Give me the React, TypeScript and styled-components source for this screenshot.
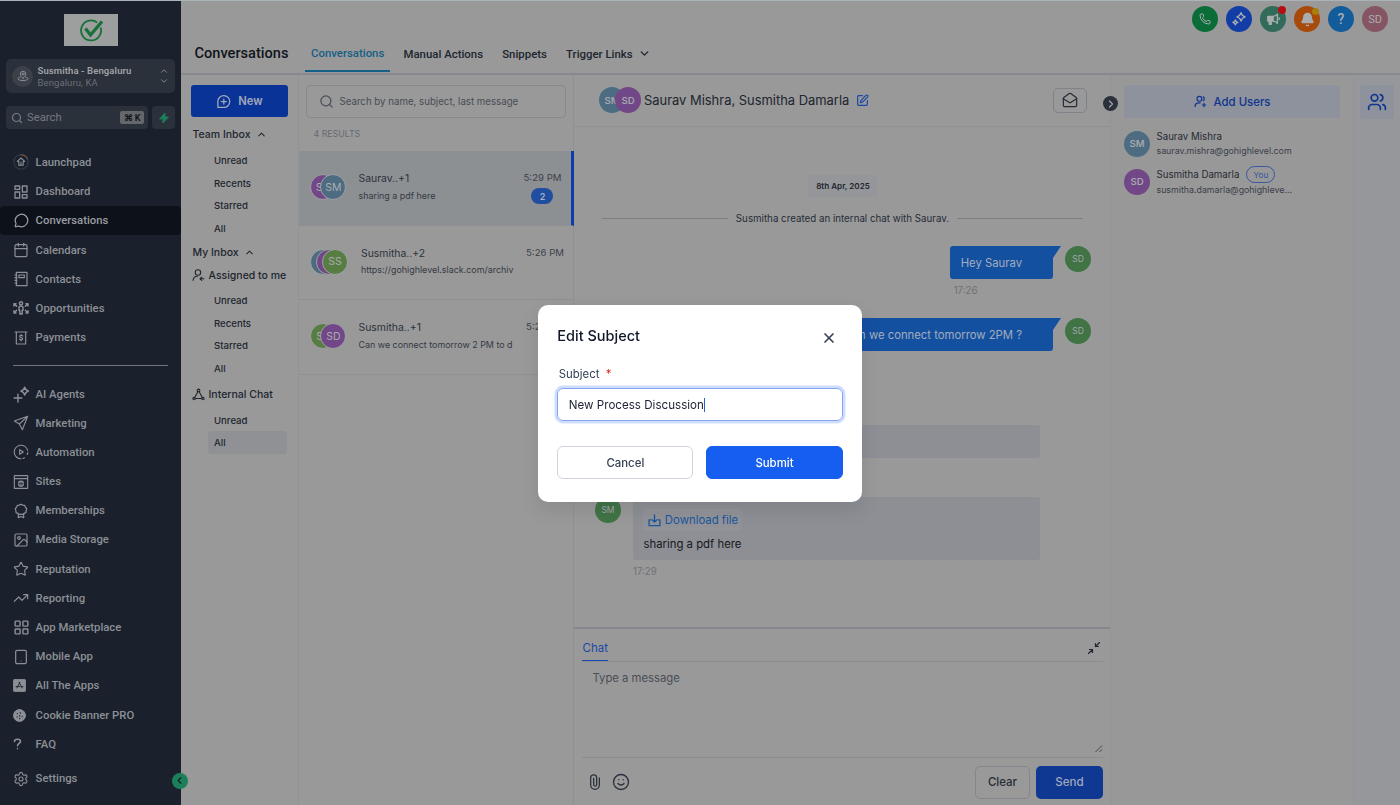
import { ReactNode } from "react";
import styled, { createGlobalStyle, css } from "styled-components";
import {
  Bell,
  Calendar,
  ChevronDown,
  ChevronLeft,
  ChevronRight,
  ChevronUp,
  Image as ImageIcon,
  LayoutGrid,
  MailOpen,
  MessageCircle,
  Phone,
  Search,
  Settings,
  Smile,
  SquarePen,
  Star,
  Tablet,
  TrendingUp,
  Users,
  X,
} from "lucide-react";

const COLOR = {
  SIDEBAR: "#1a202c",
  SIDEBAR_ACTIVE: "#0d111a",
  SIDEBAR_TEXT: "#8c9096",
  PAGE: "#999999",
  LINE: "#8f9093",
  TEXT: "#20262f",
  MUTED: "#474c55",
  BLUE: "#0a3397",
  TEAL: "#4d6c82",
  PURPLE: "#714787",
  GREEN: "#407445",
  OLIVE: "#587d43",
};

type IconProps = { size?: number; children: ReactNode; sw?: number; box?: number };

const Svg = ({ size = 16, sw = 1.8, box = 24, children }: IconProps) => (
  <svg
    width={size}
    height={size}
    viewBox={`0 0 ${box} ${box}`}
    fill="none"
    stroke="currentColor"
    strokeWidth={sw}
    strokeLinecap="round"
    strokeLinejoin="round"
  >
    {children}
  </svg>
);

const LaunchpadIcon = () => (
  <Svg sw={1.6}>
    <circle cx="12" cy="12" r="10.8" stroke="#30404f" />
    <path d="M12 1.2a10.8 10.8 0 0 1 9.4 5.4" stroke="#8a5a3c" />
    <path d="M12 6 6.5 11.2h2.2v5.8h6.6v-5.8h2.2zM12 12v5" />
  </Svg>
);

const DashboardIcon = () => (
  <Svg sw={2}>
    <path d="M3 3h7v5H3zM3 12h7v9H3zM14 3h7v9h-7zM14 16h7v5h-7z" />
  </Svg>
);

const ContactsIcon = () => (
  <Svg sw={1.8}>
    <path d="M5 2h16v20H5zM9 6h8v4H9zM3 6h3M3 10h3M3 14h3M3 18h3" />
  </Svg>
);

const OpportunitiesIcon = () => (
  <Svg sw={2.2} size={16}>
    <circle cx="12" cy="5" r="2.4" />
    <path d="M9 12a3 3 0 0 1 6 0v3.500h-1.200V21h-3.600v-5.500H9z" />
    <path d="M1.500 9V5.500h3M2 6l3.500 3.500M22.500 9V5.500h-3M22 6l-3.500 3.500M1.500 16v3.500h3M2 19l3.500-3.500M22.500 16v3.500h-3M22 19l-3.500-3.500" />
  </Svg>
);

const PaymentsIcon = () => (
  <Svg sw={1.8}>
    <path d="M3 3h18M5 3v18h14V3M14.500 9c-.6-1-4.500-1.400-4.500.8 0 2.200 4.500 1.200 4.500 3.400 0 2.300-4 1.900-5 .6M12.200 7v1M12.200 15.200v1.300" />
  </Svg>
);

const AgentsIcon = () => (
  <Svg sw={2} size={17}>
    <path d="M16.500 1.800c.9 3.400 2.100 4.600 5.500 5.500-3.400.9-4.600 2.100-5.500 5.500-.9-3.400-2.100-4.600-5.500-5.500 3.400-.9 4.600-2.100 5.500-5.500zM7 11.500v11M1.500 17h11" />
  </Svg>
);

const MarketingIcon = () => (
  <Svg sw={1.7}>
    <path d="M22 2 2 9l7.500 4.500L14 22zM22 2 9.500 13.500" />
  </Svg>
);

const AutomationIcon = () => (
  <Svg sw={1.7}>
    <path d="M12 22.200a10.200 10.200 0 1 1 10-12.500" />
    <path d="M22.200 13c-.1 1-.4 2-.8 2.800M15 21.700c.8-.3 1.500-.6 2.200-1" />
    <path d="m10 8.500 5.500 3.500-5.500 3.500z" />
  </Svg>
);

const SitesIcon = () => (
  <Svg sw={1.7}>
    <path d="M2 2.500h20v19H2zM2 7h20" />
    <circle cx="12" cy="14.500" r="3.800" fill="currentColor" fillOpacity=".6" />
    <path d="M8.500 14.500h7" stroke="#1a202c" strokeWidth="1" />
  </Svg>
);

const MembershipsIcon = () => (
  <Svg sw={1.8}>
    <path d="m12 1.800 2.600 1.400 3 .3 1 2.800 2 2.300-.9 2.900-.3 3-2.800 1.100L14.500 17h-5l-2.100-1.400-2.800-1.100-.3-3-.9-2.900 2-2.300 1-2.800 3-.3z" />
    <path d="M8 16.500V22l4-1.800 4 1.800v-5.500" />
  </Svg>
);

const AllAppsIcon = () => (
  <Svg size={13} sw={1.6}>
    <rect x="1" y="1" width="22" height="22" rx="1.500" fill="currentColor" />
    <path d="m12.800 6-5.600 10.500M11.200 6l5.600 10.500M5.500 14h7.500M16 14h2.500" stroke="#1a202c" />
  </Svg>
);

const CookieIcon = () => (
  <Svg size={13}>
    <circle cx="12" cy="12" r="11" fill="currentColor" />
    <path
      d="M8 8.500h.1M13.500 7.500h.1M7.500 14.500h.1M12.500 12.500h.1M12.500 17.500h.1M17 14h.1"
      stroke="#1a202c"
      strokeWidth="2.600"
    />
  </Svg>
);

const FaqIcon = () => (
  <Svg size={12} sw={3.2}>
    <path d="M3 7c0-6 12-6 12 0 0 4-6 4-6 8.500M9 21v.2" />
  </Svg>
);

const UserAddIcon = () => (
  <Svg size={13} sw={2.2}>
    <circle cx="10" cy="7" r="4.500" />
    <path d="M2 21c0-4 2.500-6.500 7-6.500h2.500M17 3.200c2.600 1.600 2.600 5.800 0 7.500M18.500 15.500v6M15.500 18.500h6" />
  </Svg>
);

const AssignedIcon = () => (
  <Svg size={13} sw={2}>
    <circle cx="11" cy="6.500" r="5" />
    <path d="M2 21c.5-5 3.500-7.500 8-7.500M15 18h7M18 15l-3.200 3 3.200 3" />
  </Svg>
);

const NetworkIcon = () => (
  <Svg size={13} sw={2}>
    <circle cx="12" cy="4.500" r="2.500" />
    <circle cx="3.800" cy="19.500" r="2.200" />
    <circle cx="20.200" cy="19.500" r="2.200" />
    <path d="M10.800 7 5 17.500M13.200 7 19 17.500M6 19.500h12" />
  </Svg>
);

const NewChatIcon = () => (
  <Svg size={15} sw={2}>
    <path d="M3 21.500v-9.700A9.500 9.500 0 1 1 12.500 21.500zM12.500 8v8M8.500 12h8" />
  </Svg>
);

const PinIcon = () => (
  <Svg size={12} sw={1.9}>
    <path d="M12 16.500c-3.500-3-5.500-5.500-5.500-8.500a5.500 5.500 0 0 1 11 0c0 3-2 5.500-5.500 8.500z" />
    <circle cx="12" cy="8" r="2" />
    <path d="M6.500 14.500c-3 .6-4.500 1.600-4.500 3 0 2 4 3.500 10 3.500s10-1.500 10-3.500c0-1.400-1.500-2.400-4.500-3" />
  </Svg>
);

const SparkleIcon = () => (
  <Svg size={16} sw={2}>
    <path d="M15 2.500c1 4 2.300 5.300 6.300 6.300-4 1-5.300 2.300-6.300 6.300-1-4-2.300-5.300-6.300-6.300 4-1 5.300-2.300 6.300-6.300zM6.500 13.500c.6 2.300 1.400 3.100 3.700 3.700-2.300.6-3.100 1.400-3.700 3.700-.6-2.300-1.400-3.100-3.700-3.700 2.300-.6 3.100-1.400 3.700-3.700z" />
  </Svg>
);

const MegaphoneIcon = () => (
  <Svg size={14} sw={2.2}>
    <path d="M12 7.500v8c3 .2 5.500 1.500 7.500 4V3.500c-2 2.500-4.500 3.800-7.500 4z" />
    <path d="M12 7.500H3v8h9zM5.500 15.500V21H9v-5.500" fill="currentColor" />
    <path d="M22.500 10v3" />
  </Svg>
);

const DownloadIcon = () => (
  <Svg size={13} sw={2.4}>
    <path d="M12 1.500v13M7.500 10.500l4.500 4.300 4.500-4.300M4.500 11H2v10.500h20V11h-2.500" />
  </Svg>
);

const CollapseIcon = () => (
  <Svg size={12} sw={1.2} box={12}>
    <path d="m11.500.5-4 4M7.500 1.500v3h3M.5 11.500l4-4M4.500 10.500v-3h-3" />
  </Svg>
);

const ClipIcon = () => (
  <Svg size={16} sw={1.9}>
    <path d="M18.500 6v10.500a6.500 6.500 0 0 1-13 0V5.800a4.500 4.500 0 0 1 9 0v10a2.200 2.200 0 0 1-4.500 0V6.500" />
  </Svg>
);

const Logo = () => (
  <svg width="25" height="25" viewBox="0 0 25 25" fill="none" stroke="#17703a">
    <path d="M21.600 9.500a10 10 0 1 1-3.500-5" strokeWidth="1.800" />
    <path d="m6.500 10.500 5 6.500L23 3.500" strokeWidth="3.200" />
  </svg>
);

const TOP_ITEMS = [
  { label: "Launchpad", icon: <LaunchpadIcon /> },
  { label: "Dashboard", icon: <DashboardIcon /> },
  { label: "Conversations", icon: <MessageCircle size={15} strokeWidth={2} />, active: true },
  { label: "Calendars", icon: <Calendar size={16} strokeWidth={1.8} /> },
  { label: "Contacts", icon: <ContactsIcon /> },
  { label: "Opportunities", icon: <OpportunitiesIcon /> },
  { label: "Payments", icon: <PaymentsIcon /> },
];

const BOTTOM_ITEMS = [
  { label: "AI Agents", icon: <AgentsIcon /> },
  { label: "Marketing", icon: <MarketingIcon /> },
  { label: "Automation", icon: <AutomationIcon /> },
  { label: "Sites", icon: <SitesIcon /> },
  { label: "Memberships", icon: <MembershipsIcon /> },
  { label: "Media Storage", icon: <ImageIcon size={16} strokeWidth={1.8} /> },
  { label: "Reputation", icon: <Star size={16} strokeWidth={1.7} /> },
  { label: "Reporting", icon: <TrendingUp size={16} strokeWidth={1.8} /> },
  { label: "App Marketplace", icon: <LayoutGrid size={17} strokeWidth={2} /> },
  { label: "Mobile App", icon: <Tablet size={16} strokeWidth={1.8} /> },
  { label: "All The Apps", icon: <AllAppsIcon />, small: true },
  { label: "Cookie Banner PRO", icon: <CookieIcon />, small: true },
  { label: "FAQ", icon: <FaqIcon />, small: true },
];

const THREADS = [
  {
    name: "Saurav..+1",
    text: "sharing a pdf here",
    time: "5:29 PM",
    unread: 2,
    avatars: [
      { text: "SD", color: COLOR.PURPLE },
      { text: "SM", color: COLOR.TEAL },
    ],
  },
  {
    name: "Susmitha..+2",
    text: "https://gohighlevel.slack.com/archiv",
    time: "5:26 PM",
    avatars: [
      { text: "", color: COLOR.TEAL },
      { text: "", color: COLOR.PURPLE },
      { text: "SS", color: COLOR.OLIVE },
    ],
  },
  {
    name: "Susmitha..+1",
    text: "Can we connect tomorrow 2 PM to d",
    time: "5:25 PM",
    avatars: [
      { text: "SS", color: COLOR.OLIVE },
      { text: "SD", color: COLOR.PURPLE },
    ],
  },
];

const Sidebar = () => (
  <S.Sidebar>
    <S.LogoBox>
      <Logo />
    </S.LogoBox>
    <S.Account>
      <S.AccountIcon>
        <PinIcon />
      </S.AccountIcon>
      <S.AccountText>
        <strong>Susmitha - Bengaluru</strong>
        <span>Bengaluru, KA</span>
      </S.AccountText>
      <S.AccountArrows>
        <ChevronUp size={10} strokeWidth={2.4} />
        <ChevronDown size={10} strokeWidth={2.4} />
      </S.AccountArrows>
    </S.Account>
    <S.SearchRow>
      <S.SideSearch>
        <Search size={12} strokeWidth={2.4} />
        <span>Search</span>
        <S.Shortcut>⌘ K</S.Shortcut>
      </S.SideSearch>
      <S.Bolt>
        <svg width="10" height="12" viewBox="0 0 10 12">
          <path d="M6 1 .6 6.900h3.600L3.800 11l5.600-5.900H6z" fill="#1d7f5a" stroke="#1d7f5a" />
        </svg>
      </S.Bolt>
    </S.SearchRow>
    <S.Menu>
      {TOP_ITEMS.map(({ label, icon, active }) => (
        <S.MenuItem key={label} $active={active}>
          <S.MenuIcon>{icon}</S.MenuIcon>
          {label}
        </S.MenuItem>
      ))}
    </S.Menu>
    <S.MenuDivider />
    <S.Menu>
      {BOTTOM_ITEMS.map(({ label, icon, small }) => (
        <S.MenuItem key={label}>
          <S.MenuIcon $small={small}>{icon}</S.MenuIcon>
          {label}
        </S.MenuItem>
      ))}
    </S.Menu>
    <S.SettingsItem>
      <S.MenuIcon>
        <Settings size={16} strokeWidth={1.7} />
      </S.MenuIcon>
      Settings
    </S.SettingsItem>
    <S.Collapse>
      <ChevronLeft size={11} strokeWidth={2.6} />
    </S.Collapse>
  </S.Sidebar>
);

const TopBar = () => (
  <S.TopBar>
    <S.PageTitle>Conversations</S.PageTitle>
    <S.Tabs>
      <S.Tab $active>Conversations</S.Tab>
      <S.Tab>Manual Actions</S.Tab>
      <S.Tab>Snippets</S.Tab>
      <S.Tab>
        Trigger Links
        <ChevronDown size={13} strokeWidth={2.6} />
      </S.Tab>
    </S.Tabs>
    <S.Actions>
      <S.Action $color="#0a6c36">
        <Phone size={12} strokeWidth={2} />
      </S.Action>
      <S.Action $color="#123da6">
        <SparkleIcon />
      </S.Action>
      <S.Action $color="#336b5a">
        <MegaphoneIcon />
        <S.Dot $color="#b40f12" />
      </S.Action>
      <S.Action $color="#a84a0a">
        <Bell size={15} strokeWidth={2} fill="currentColor" />
        <S.Dot $color="#a87f0c" $small />
      </S.Action>
      <S.Action $color="#135c9c">?</S.Action>
      <S.Action $color="#855563" $user>
        SD
      </S.Action>
    </S.Actions>
  </S.TopBar>
);

const InboxNav = () => (
  <S.InboxNav>
    <S.NewButton>
      <NewChatIcon />
      New
    </S.NewButton>
    <S.Group $top={7} $bottom={5}>
      Team Inbox <ChevronUp size={11} strokeWidth={2.2} />
    </S.Group>
    <S.Folder>Unread</S.Folder>
    <S.Folder>Recents</S.Folder>
    <S.Folder>Starred</S.Folder>
    <S.Folder>All</S.Folder>
    <S.Group $top={2.9} $bottom={2.5}>
      My Inbox <ChevronUp size={11} strokeWidth={2.2} />
    </S.Group>
    <S.Group $top={0} $bottom={3.9} $tight>
      <AssignedIcon /> Assigned to me
    </S.Group>
    <S.Folder>Unread</S.Folder>
    <S.Folder>Recents</S.Folder>
    <S.Folder>Starred</S.Folder>
    <S.Folder>All</S.Folder>
    <S.Group $top={4.4} $bottom={4.5} $tight>
      <NetworkIcon /> Internal Chat
    </S.Group>
    <S.Folder>Unread</S.Folder>
    <S.Folder $active>All</S.Folder>
  </S.InboxNav>
);

const ThreadList = () => (
  <S.ThreadList>
    <S.ListSearch>
      <Search size={15} strokeWidth={1.9} />
      Search by name, subject, last message
    </S.ListSearch>
    <S.Results>4 RESULTS</S.Results>
    {THREADS.map(({ name, text, time, unread, avatars }) => (
      <S.Thread key={name} $active={!!unread}>
        <S.AvatarStack $count={avatars.length}>
          {avatars.map((avatar, i) => (
            <S.ThreadAvatar key={i} $color={avatar.color} $count={avatars.length}>
              {avatar.text}
            </S.ThreadAvatar>
          ))}
        </S.AvatarStack>
        <S.ThreadText>
          <S.ThreadName>{name}</S.ThreadName>
          <S.ThreadPreview>{text}</S.ThreadPreview>
        </S.ThreadText>
        <S.ThreadMeta $unread={!!unread}>
          {time}
          {unread && <S.Unread>{unread}</S.Unread>}
        </S.ThreadMeta>
      </S.Thread>
    ))}
  </S.ThreadList>
);

const Chat = () => (
  <S.Chat>
    <S.ChatHeader>
      <S.Avatar $color={COLOR.TEAL}>SM</S.Avatar>
      <S.Avatar $color={COLOR.PURPLE} $overlap>
        SD
      </S.Avatar>
      <S.ChatTitle>Saurav Mishra, Susmitha Damarla</S.ChatTitle>
      <S.EditIcon>
        <SquarePen size={13} strokeWidth={2.2} />
      </S.EditIcon>
      <S.MailButton>
        <MailOpen size={16} strokeWidth={1.8} />
      </S.MailButton>
    </S.ChatHeader>
    <S.Messages>
      <S.DatePill>8th Apr, 2025</S.DatePill>
      <S.SystemLine>Susmitha created an internal chat with Saurav.</S.SystemLine>
      <S.OwnRow $top={20}>
        <S.OwnMessage>
          <S.OwnBubble>Hey Saurav</S.OwnBubble>
          <S.Time $own>17:26</S.Time>
        </S.OwnMessage>
        <S.Avatar $color={COLOR.GREEN} $light>
          SD
        </S.Avatar>
      </S.OwnRow>
      <S.OwnRow $top={19}>
        <S.OwnMessage>
          <S.OwnBubble>Can we connect tomorrow 2PM ?</S.OwnBubble>
        </S.OwnMessage>
        <S.Avatar $color={COLOR.GREEN} $light>
          SD
        </S.Avatar>
      </S.OwnRow>
      <S.PeerRow $top={74}>
        <S.Avatar $color={COLOR.GREEN} $light>
          SM
        </S.Avatar>
        <S.PeerMessage>
          <S.PeerBubble $height={33} />
        </S.PeerMessage>
      </S.PeerRow>
      <S.PeerRow $top={39}>
        <S.Avatar $color={COLOR.GREEN} $light>
          SM
        </S.Avatar>
        <S.PeerMessage>
          <S.PeerBubble $height={63}>
            <S.Download>
              <DownloadIcon />
              Download file
            </S.Download>
            <span>sharing a pdf here</span>
          </S.PeerBubble>
          <S.Time>17:29</S.Time>
        </S.PeerMessage>
      </S.PeerRow>
    </S.Messages>
    <S.Composer>
      <S.ComposerTabs>
        <S.ComposerTab>Chat</S.ComposerTab>
        <CollapseIcon />
      </S.ComposerTabs>
      <S.Draft>
        Type a message
        <svg width="8" height="8" viewBox="0 0 8 8" stroke="#3b3f45" strokeWidth=".9">
          <path d="M.5 7 7 .5M4.500 7 7 4.500" />
        </svg>
      </S.Draft>
      <S.ComposerFooter>
        <ClipIcon />
        <Smile size={18} strokeWidth={1.8} />
        <S.ClearButton>Clear</S.ClearButton>
        <S.SendButton>Send</S.SendButton>
      </S.ComposerFooter>
    </S.Composer>
  </S.Chat>
);

const People = () => (
  <S.People>
    <S.PanelToggle>
      <ChevronRight size={12} strokeWidth={2.6} />
    </S.PanelToggle>
    <S.AddUsers>
      <UserAddIcon />
      Add Users
    </S.AddUsers>
    <S.Person $top={10.5}>
      <S.Avatar $color={COLOR.TEAL}>SM</S.Avatar>
      <S.PersonText>
        <S.PersonName>Saurav Mishra</S.PersonName>
        <S.PersonMail>saurav.mishra@gohighlevel.com</S.PersonMail>
      </S.PersonText>
    </S.Person>
    <S.Person $top={8}>
      <S.Avatar $color={COLOR.PURPLE}>SD</S.Avatar>
      <S.PersonText>
        <S.PersonName>
          Susmitha Damarla <S.You>You</S.You>
        </S.PersonName>
        <S.PersonMail>susmitha.damarla@gohighleve...</S.PersonMail>
      </S.PersonText>
    </S.Person>
  </S.People>
);

const EditSubject = () => (
  <S.Overlay>
    <S.Modal>
      <S.ModalHeader>
        Edit Subject
        <S.Close>
          <X size={16} strokeWidth={2.5} />
        </S.Close>
      </S.ModalHeader>
      <S.Label>
        Subject <em>*</em>
      </S.Label>
      <S.Field>
        New Process Discussion
        <S.Caret />
      </S.Field>
      <S.ModalButtons>
        <S.ModalButton>Cancel</S.ModalButton>
        <S.ModalButton $primary>Submit</S.ModalButton>
      </S.ModalButtons>
    </S.Modal>
  </S.Overlay>
);

export default function App() {
  return (
    <>
      <GlobalStyle />
      <S.Page>
        <Sidebar />
        <S.Main>
          <TopBar />
          <S.Content>
            <InboxNav />
            <ThreadList />
            <Chat />
            <People />
            <S.Rail>
              <S.RailButton>
                <Users size={20} strokeWidth={2} />
              </S.RailButton>
            </S.Rail>
          </S.Content>
        </S.Main>
      </S.Page>
      <EditSubject />
    </>
  );
}

const GlobalStyle = createGlobalStyle`
  * {
    box-sizing: border-box;
  }
  body {
    margin: 0;
    overflow: hidden;
    background: ${COLOR.PAGE};
    color: ${COLOR.TEXT};
    font-family: Inter, "Liberation Sans", sans-serif;
    font-size: 12px;
  }
  button {
    font-family: inherit;
    padding: 0;
    border: none;
  }
  svg {
    flex-shrink: 0;
  }
`;

const center = css`
  display: flex;
  align-items: center;
  justify-content: center;
`;

const S = {
  Page: styled.div`
    display: flex;
    width: 1400px;
    height: 805px;
    border-top: 1px solid #a9b3b8;
  `,

  Sidebar: styled.aside`
    position: relative;
    display: flex;
    flex-direction: column;
    width: 181.3px;
    flex-shrink: 0;
    padding: 13px 6px 0;
    background: ${COLOR.SIDEBAR};
    color: ${COLOR.SIDEBAR_TEXT};
    font-family: Roboto, "Liberation Sans", sans-serif;
  `,

  LogoBox: styled.div`
    ${center}
    width: 54px;
    height: 32px;
    margin-left: 58px;
    background: #9c9f9d;
  `,

  Account: styled.div`
    display: flex;
    align-items: center;
    width: 169px;
    height: 34px;
    margin-top: 13px;
    padding: 0 6px;
    border-radius: 5px;
    background: #2b313b;
  `,

  AccountIcon: styled.div`
    ${center}
    width: 21px;
    height: 21px;
    border-radius: 50%;
    background: #3c4048;
  `,

  AccountText: styled.div`
    flex: 1;
    display: flex;
    flex-direction: column;
    margin-top: 2px;
    margin-left: 4.5px;
    font-size: 9.5px;
    line-height: 12px;
    white-space: nowrap;

    strong {
      color: #a0a3a7;
      font-weight: 600;
      letter-spacing: 0.1px;
    }
    span {
      color: #6a6f77;
      letter-spacing: 0.1px;
    }
  `,

  AccountArrows: styled.div`
    display: flex;
    flex-direction: column;
    color: #83878d;
  `,

  SearchRow: styled.div`
    display: flex;
    gap: 4px;
    margin-top: 13px;
  `,

  SideSearch: styled.div`
    display: flex;
    align-items: center;
    width: 142px;
    height: 23px;
    padding: 0 4px 0 5px;
    border-radius: 4px;
    background: #2b313b;
    color: #757a82;
    font-size: 11.3px;

    span {
      margin-left: 4px;
      flex: 1;
    }
  `,

  Shortcut: styled.div`
    ${center}
    width: 24px;
    height: 13px;
    border-radius: 2px;
    background: #64676c;
    color: #14181f;
    font-size: 9px;
    font-weight: 700;
  `,

  Bolt: styled.div`
    ${center}
    width: 23px;
    height: 23px;
    border-radius: 4px;
    background: #2b313b;
  `,

  Menu: styled.nav`
    margin: 18.9px -6px 0;
  `,

  MenuItem: styled.div<{ $active?: boolean }>`
    display: flex;
    align-items: center;
    height: 29.2px;
    padding-left: 12px;
    border-radius: 4px;
    background: ${(props) => (props.$active ? COLOR.SIDEBAR_ACTIVE : "transparent")};
    color: ${(props) => (props.$active ? "#9b9da1" : COLOR.SIDEBAR_TEXT)};
    font-size: 11.3px;
    font-weight: 500;
  `,

  MenuIcon: styled.span<{ $small?: boolean }>`
    ${center}
    width: ${(props) => (props.$small ? 14 : 18)}px;
    margin-right: ${(props) => (props.$small ? 9.6 : 5.6)}px;
  `,

  MenuDivider: styled.div`
    height: 1px;
    width: 155px;
    margin: 13px 0 -5.7px 7px;
    background: #70757b;
  `,

  SettingsItem: styled.div`
    display: flex;
    align-items: center;
    height: 29px;
    margin: 5.6px -6px 0;
    padding-left: 12px;
    font-size: 11.3px;
    font-weight: 500;
  `,

  Collapse: styled.div`
    ${center}
    position: absolute;
    right: -6.5px;
    bottom: 16.5px;
    width: 16px;
    height: 16px;
    border-radius: 50%;
    background: #1d7f5a;
    color: #10251f;
    z-index: 1;
  `,

  Main: styled.div`
    flex: 1;
    display: flex;
    flex-direction: column;
    min-width: 0;
  `,

  TopBar: styled.header`
    display: flex;
    height: 74px;
    padding: 0 12px 0 13.2px;
    border-bottom: 2px solid #87898e;
    color: #20262f;
    font-family: Roboto, "Liberation Sans", sans-serif;
    font-weight: 500;
  `,

  PageTitle: styled.div`
    align-self: flex-end;
    width: 110.5px;
    margin-bottom: 10.5px;
    color: #10151c;
    font-size: 14.6px;
    line-height: 20px;
  `,

  Tabs: styled.div`
    display: flex;
    gap: 7.2px;
    align-items: flex-end;
    margin-bottom: 1px;
  `,

  Tab: styled.div<{ $active?: boolean }>`
    display: flex;
    align-items: center;
    gap: 5px;
    height: ${(props) => (props.$active ? 37 : 35)}px;
    padding: 0 6px;
    border-bottom: 2px solid ${(props) => (props.$active ? "#145f86" : "transparent")};
    color: ${(props) => (props.$active ? "#145f86" : "#20262f")};
    font-size: 11.4px;
  `,

  Actions: styled.div`
    display: flex;
    gap: 8px;
    margin-left: auto;
    padding-top: 5px;
  `,

  Action: styled.div<{ $color: string; $user?: boolean }>`
    ${center}
    position: relative;
    width: 26px;
    height: 26px;
    border-radius: 50%;
    background: ${(props) => props.$color};
    color: #a9adb0;
    font-size: ${(props) => (props.$user ? 11 : 14)}px;
    font-weight: ${(props) => (props.$user ? 400 : 500)};
  `,

  Dot: styled.span<{ $color: string; $small?: boolean }>`
    position: absolute;
    top: ${(props) => (props.$small ? 2 : 0)}px;
    right: ${(props) => (props.$small ? 1 : 0)}px;
    width: ${(props) => (props.$small ? 7 : 8)}px;
    height: ${(props) => (props.$small ? 7 : 8)}px;
    border-radius: 50%;
    background: ${(props) => props.$color};
  `,

  Content: styled.div`
    flex: 1;
    display: flex;
    min-height: 0;
  `,

  InboxNav: styled.div`
    width: 117.7px;
    flex-shrink: 0;
    padding: 10px 11px 0 9.7px;
    border-right: 1px solid #929396;
  `,

  NewButton: styled.button`
    ${center}
    gap: 7px;
    width: 97px;
    height: 32px;
    border-radius: 3px;
    background: ${COLOR.BLUE};
    color: #a2a9bb;
    font-size: 11.2px;
    font-weight: 600;
  `,

  Group: styled.div<{ $top: number; $bottom: number; $tight?: boolean }>`
    display: flex;
    align-items: center;
    gap: ${(props) => (props.$tight ? 3 : 5)}px;
    height: 20px;
    margin: ${(props) => props.$top}px -5px ${(props) => props.$bottom}px 1.5px;
    font-size: 10.5px;
    font-weight: 500;
    white-space: nowrap;
  `,

  Folder: styled.div<{ $active?: boolean }>`
    height: 22.7px;
    margin-left: 17px;
    margin-right: -0.5px;
    padding-left: 6px;
    border-radius: 4px;
    background: ${(props) => (props.$active ? "#8f9195" : "transparent")};
    font-size: 9.6px;
    font-weight: 500;
    line-height: 24px;
  `,

  ThreadList: styled.div`
    display: flex;
    flex-direction: column;
    width: 275.5px;
    flex-shrink: 0;
    padding-top: 10px;
    border-right: 1px solid ${COLOR.LINE};
  `,

  ListSearch: styled.div`
    display: flex;
    align-items: center;
    gap: 5px;
    width: 260px;
    height: 33px;
    margin-left: 7px;
    padding-left: 12.5px;
    border: 1px solid #85888d;
    border-radius: 4px;
    color: ${COLOR.MUTED};
    font-size: 9.7px;
  `,

  Results: styled.div`
    height: 33px;
    padding-left: 14.5px;
    color: #666a71;
    font-size: 8.8px;
    line-height: 32px;
  `,

  Thread: styled.div<{ $active: boolean }>`
    display: flex;
    height: 74.6px;
    margin-right: -1px;
    padding-left: 11px;
    padding-top: 19px;
    border-bottom: 1px solid ${COLOR.LINE};
    border-right: 3px solid ${(props) => (props.$active ? "#0d3ca8" : "transparent")};
    background: ${(props) => (props.$active ? "#8d9093" : "transparent")};
  `,

  AvatarStack: styled.div<{ $count: number }>`
    display: flex;
    width: ${(props) => (props.$count > 2 ? 51 : 48.5)}px;
    flex-shrink: 0;
    padding-top: 4px;
  `,

  ThreadAvatar: styled.div<{ $color: string; $count: number }>`
    ${center}
    width: 26px;
    height: 26px;
    flex-shrink: 0;
    border: 1px solid #a0a1a3;
    border-radius: 50%;
    background: ${(props) => props.$color};
    color: #a9abb0;
    font-size: 10.5px;

    &:not(:first-child) {
      margin-left: ${(props) => (props.$count > 2 ? -20 : -15.5)}px;
    }
  `,

  ThreadText: styled.div`
    flex: 1;
    min-width: 0;
    padding-top: 1px;
  `,

  ThreadName: styled.div`
    color: #2b313b;
    font-size: 10.4px;
    line-height: 16px;
  `,

  ThreadPreview: styled.div`
    margin-top: 1.5px;
    color: #343943;
    font-size: 8.92px;
    line-height: 14px;
    white-space: nowrap;
  `,

  ThreadMeta: styled.div<{ $unread: boolean }>`
    display: flex;
    flex-direction: column;
    align-items: center;
    gap: 3px;
    width: 38px;
    margin-right: ${(props) => (props.$unread ? 10 : 7.5)}px;
    color: #3c414b;
    font-size: 9.6px;
    line-height: 15px;
    white-space: nowrap;
  `,

  Unread: styled.span`
    ${center}
    width: 22px;
    height: 16px;
    border-radius: 8px;
    background: #1f4da0;
    color: #a6b1c8;
    font-size: 9px;
    font-weight: 600;
  `,

  Chat: styled.section`
    display: flex;
    flex-direction: column;
    width: 536.5px;
    flex-shrink: 0;
    border-right: 1px solid #929396;
  `,

  ChatHeader: styled.div`
    display: flex;
    align-items: center;
    height: 51.5px;
    padding: 0 23px 0 24.5px;
    border-bottom: 1px solid ${COLOR.LINE};
  `,

  Avatar: styled.div<{ $color: string; $overlap?: boolean; $light?: boolean }>`
    ${center}
    width: 26px;
    height: 26px;
    flex-shrink: 0;
    margin-left: ${(props) => (props.$overlap ? -10 : 0)}px;
    border-radius: 50%;
    background: ${(props) => props.$color};
    color: #a4a6ab;
    font-size: ${(props) => (props.$light ? 8.5 : 9.6)}px;
    font-weight: ${(props) => (props.$light ? 400 : 600)};
  `,

  ChatTitle: styled.div`
    margin-left: 3px;
    color: #20262f;
    font-size: 12.93px;
  `,

  EditIcon: styled.span`
    display: flex;
    margin-left: 6.5px;
    color: #1a48a8;
  `,

  MailButton: styled.button`
    ${center}
    width: 34px;
    height: 25px;
    margin-left: auto;
    border: 1px solid #7f8389;
    border-radius: 5px;
    background: transparent;
    color: #262c36;
  `,

  Messages: styled.div`
    flex: 1;
    display: flex;
    flex-direction: column;
    padding: 48px 19px 0 20.5px;
  `,

  DatePill: styled.div`
    ${center}
    align-self: center;
    width: 69px;
    height: 22px;
    background: #94969a;
    font-size: 8.1px;
    font-weight: 600;
  `,

  SystemLine: styled.div`
    display: flex;
    align-items: center;
    gap: 8px;
    height: 16px;
    margin: 13.5px 8px 0 7px;
    color: #262c36;
    font-size: 9.75px;
    white-space: nowrap;

    &::before,
    &::after {
      content: "";
      flex: 1;
      height: 1px;
      background: #7c7e82;
    }
  `,

  OwnRow: styled.div<{ $top: number }>`
    display: flex;
    justify-content: flex-end;
    gap: 12px;
    margin-top: ${(props) => props.$top}px;
  `,

  OwnMessage: styled.div`
    display: flex;
    flex-direction: column;
  `,

  OwnBubble: styled.div`
    position: relative;
    height: 33px;
    padding: 0 31px 0 11px;
    border-radius: 3px 0 3px 3px;
    background: #1450a0;
    color: #a3adbd;
    font-size: 11.3px;
    line-height: 34px;

    &::after {
      content: "";
      position: absolute;
      top: 0;
      left: 100%;
      width: 8px;
      height: 12px;
      background: inherit;
      clip-path: polygon(0 0, 100% 0, 0 100%);
    }
  `,

  Time: styled.div<{ $own?: boolean }>`
    margin: ${(props) => (props.$own ? "4px 0 0 4px" : "4px 0 0")};
    color: #6e7176;
    font-size: 9.7px;
    line-height: 16px;
  `,

  PeerRow: styled.div<{ $top: number }>`
    display: flex;
    gap: 12px;
    margin-top: ${(props) => props.$top}px;
  `,

  PeerMessage: styled.div`
    width: 407px;
  `,

  PeerBubble: styled.div<{ $height: number }>`
    display: flex;
    flex-direction: column;
    gap: 6px;
    align-items: flex-start;
    height: ${(props) => props.$height}px;
    padding: 12px 10.5px 0;
    border-radius: 3px;
    background: #8d8f95;
    color: #15181d;
    font-size: 11.35px;
  `,

  Download: styled.div`
    ${center}
    gap: 4px;
    width: 99px;
    height: 22px;
    border-radius: 3px;
    background: #919398;
    color: #19569e;
  `,

  Composer: styled.div`
    height: 178px;
    padding: 0 7px 0 8px;
    border-top: 2px solid #85878c;
  `,

  ComposerTabs: styled.div`
    display: flex;
    justify-content: space-between;
    align-items: center;
    height: 33px;
    padding-right: 3px;
    padding-top: 6px;
    border-bottom: 1px solid #8a8c90;
  `,

  ComposerTab: styled.div`
    height: 26px;
    margin-top: -1px;
    border-bottom: 1px solid #1a4ab5;
    color: #1a48a8;
    font-size: 11.5px;
    line-height: 26px;
  `,

  Draft: styled.div`
    display: flex;
    justify-content: space-between;
    align-items: flex-start;
    height: 96px;
    padding: 9px 0 4px 10px;
    border-bottom: 1px solid #8a8c90;
    color: #4a4e56;
    font-size: 11.3px;
    line-height: 15px;

    svg {
      align-self: flex-end;
    }
  `,

  ComposerFooter: styled.div`
    display: flex;
    align-items: center;
    gap: 9px;
    height: 48px;
    padding-left: 4.5px;
    color: #2b313b;
  `,

  ClearButton: styled.button`
    width: 55px;
    height: 33px;
    margin-left: auto;
    margin-right: -3px;
    border: 1px solid #83868c;
    border-radius: 5px;
    background: transparent;
    color: #262c36;
    font-size: 11.5px;
    font-weight: 500;
  `,

  SendButton: styled.button`
    width: 67px;
    height: 33px;
    border-radius: 5px;
    background: #0e3891;
    color: #a2a9bb;
    font-size: 11.6px;
    font-weight: 500;
  `,

  People: styled.aside`
    position: relative;
    width: 242.5px;
    flex-shrink: 0;
    padding: 10px 0 0 13px;
    background: #989898;
  `,

  PanelToggle: styled.div`
    ${center}
    position: absolute;
    top: 21px;
    left: -7.5px;
    width: 15px;
    height: 15px;
    border-radius: 50%;
    background: #2b303b;
    color: #a0a2a5;
  `,

  AddUsers: styled.button`
    ${center}
    gap: 7px;
    width: 216px;
    height: 33px;
    border-radius: 4px;
    background: #8e929d;
    color: #0f358f;
    font-size: 11.4px;
    font-weight: 500;
  `,

  Person: styled.div<{ $top: number }>`
    display: flex;
    align-items: center;
    gap: 6.5px;
    height: 30px;
    margin-top: ${(props) => props.$top}px;
  `,

  PersonText: styled.div`
    margin-top: -0.5px;
    white-space: nowrap;
  `,

  PersonName: styled.div`
    display: flex;
    align-items: center;
    min-height: 14px;
    color: #262b34;
    font-size: 9.7px;
  `,

  PersonMail: styled.div`
    height: 13px;
    color: #3b404a;
    font-size: 8.83px;
    line-height: 13px;
  `,

  You: styled.span`
    ${center}
    width: 29px;
    height: 17px;
    margin-left: 7px;
    border: 1px solid #35589f;
    border-radius: 9px;
    color: #2f549f;
    font-size: 8.2px;
  `,

  Rail: styled.div`
    flex: 1;
    padding: 10px 0 0 5.5px;
    border-left: 1px solid #929396;
    background: #95979a;
  `,

  RailButton: styled.button`
    ${center}
    width: 34px;
    height: 34px;
    border-radius: 3px;
    background: #8e929d;
    color: #0f358f;
  `,

  Overlay: styled.div`
    position: fixed;
    inset: 0;
    display: flex;
    justify-content: center;
    align-items: flex-start;
    padding-top: 305px;
    z-index: 10;
  `,

  Modal: styled.div`
    width: 324px;
    height: 196.5px;
    padding: 18px 19.5px 0 19.3px;
    border-radius: 10px;
    background: #ffffff;
    box-shadow: 0 8px 20px rgba(16, 24, 40, 0.1);
  `,

  ModalHeader: styled.div`
    display: flex;
    justify-content: space-between;
    align-items: center;
    height: 26px;
    padding-right: 6px;
    color: #101828;
    font-size: 14.5px;
    font-weight: 500;
    line-height: 24px;
  `,

  Close: styled.span`
    display: flex;
    padding-top: 3px;
    color: #344054;
  `,

  Label: styled.div`
    margin: 17px 0 0 1.5px;
    color: #344054;
    font-size: 11.4px;
    line-height: 16px;

    em {
      margin-left: 3px;
      color: #d92d20;
      font-style: normal;
    }
  `,

  Field: styled.div`
    display: flex;
    align-items: center;
    height: 33px;
    margin-top: 5.5px;
    padding-top: 1px;
    padding-left: 10.5px;
    border: 1px solid #84a5f5;
    border-radius: 6px;
    box-shadow: 0 0 0 2.5px #cfdefb;
    color: #1a2130;
    font-size: 11.6px;
  `,

  Caret: styled.span`
    width: 1px;
    height: 14px;
    background: #2b5fd0;
  `,

  ModalButtons: styled.div`
    display: flex;
    gap: 13px;
    margin-top: 25.5px;
  `,

  ModalButton: styled.button<{ $primary?: boolean }>`
    flex: 1;
    height: 33px;
    border: 1px solid ${(props) => (props.$primary ? "#155eef" : "#d0d5dd")};
    border-radius: 6px;
    background: ${(props) => (props.$primary ? "#155eef" : "#ffffff")};
    color: ${(props) => (props.$primary ? "#ffffff" : "#344054")};
    font-size: 11.4px;
    font-weight: 500;
  `,
};
